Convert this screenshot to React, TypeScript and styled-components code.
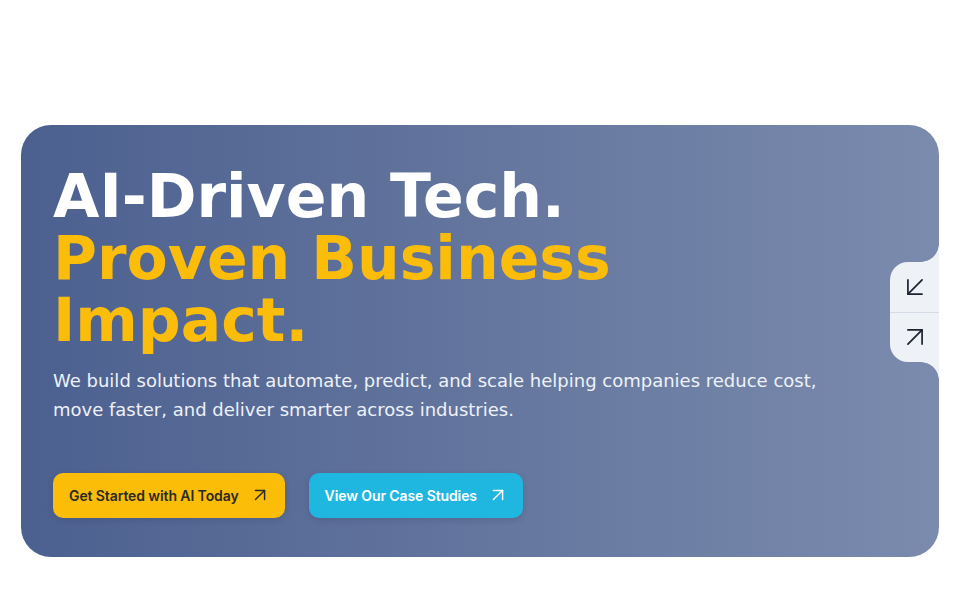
import React from "react";
import styled, { createGlobalStyle } from "styled-components";
import { ArrowDownLeft, ArrowUpRight } from "lucide-react";

const GlobalStyle = createGlobalStyle`
  html, body {
    margin: 0;
    padding: 0;
    background: #ffffff;
  }

  * {
    box-sizing: border-box;
  }
`;

const Page = styled.div`
  width: 960px;
  height: 600px;
  padding: 125px 21px 0;
  overflow: hidden;
`;

const Hero = styled.section`
  position: relative;
  height: 432px;
  padding: 40px 32px;
  border-radius: 30px;
  background: linear-gradient(90deg, #4c6090 0%, #66789f 55%, #7b8bae 100%);
  color: #ffffff;
  font-family: "DejaVu Sans", sans-serif;
`;

const Title = styled.h1`
  margin: 0;
  max-width: 640px;
  font-size: 60px;
  font-weight: 700;
  line-height: 62px;
  color: #ffffff;

  .accent {
    display: block;
    color: #fbbd0a;
  }
`;

const Lead = styled.p`
  margin: 16px 0 0;
  max-width: 800px;
  font-size: 18px;
  line-height: 28.8px;
  color: #eef1f8;
`;

const Actions = styled.div`
  display: flex;
  gap: 24px;
  margin-top: 48px;
`;

const CtaButton = styled.button<{ $variant: "primary" | "secondary" }>`
  display: inline-flex;
  align-items: center;
  gap: 10px;
  height: 45px;
  padding: 0 14px 0 16px;
  border: none;
  border-radius: 10px;
  font-family: Inter, "Noto Sans", sans-serif;
  font-size: 14px;
  font-weight: 600;
  letter-spacing: -0.1px;
  cursor: pointer;
  background: ${(p) => (p.$variant === "primary" ? "#fbbd08" : "#1fb7df")};
  color: ${(p) => (p.$variant === "primary" ? "#2b2a26" : "#ffffff")};
  box-shadow: 0 2px 6px rgba(20, 30, 60, 0.15);
`;

const SideTab = styled.div`
  position: absolute;
  right: 0;
  top: 137px;
  width: 49px;
  height: 100px;
  display: flex;
  flex-direction: column;
  background: #eef2f7;
  border-radius: 18px 0 0 18px;

  &::before,
  &::after {
    content: "";
    position: absolute;
    right: 0;
    width: 18px;
    height: 18px;
  }

  &::before {
    top: -18px;
    background: radial-gradient(circle at 0 0, transparent 17.5px, #eef2f7 18px);
  }

  &::after {
    bottom: -18px;
    background: radial-gradient(circle at 0 100%, transparent 17.5px, #eef2f7 18px);
  }
`;

const TabButton = styled.button`
  flex: 1;
  display: flex;
  align-items: center;
  justify-content: center;
  padding: 0;
  border: none;
  background: transparent;
  color: #1c2230;
  cursor: pointer;

  & + & {
    border-top: 1px solid #d6dce6;
  }
`;

export default function App() {
  return (
    <>
      <GlobalStyle />
      <Page>
        <Hero>
          <Title>
            AI-Driven Tech.
            <span className="accent">Proven Business Impact.</span>
          </Title>
          <Lead>
            We build solutions that automate, predict, and scale helping companies reduce cost,
            move faster, and deliver smarter across industries.
          </Lead>
          <Actions>
            <CtaButton $variant="primary">
              Get Started with AI Today
              <ArrowUpRight size={22} strokeWidth={1.6} />
            </CtaButton>
            <CtaButton $variant="secondary">
              View Our Case Studies
              <ArrowUpRight size={22} strokeWidth={1.6} />
            </CtaButton>
          </Actions>
          <SideTab>
            <TabButton aria-label="Previous">
              <ArrowDownLeft size={34} strokeWidth={1.2} />
            </TabButton>
            <TabButton aria-label="Next">
              <ArrowUpRight size={34} strokeWidth={1.2} />
            </TabButton>
          </SideTab>
        </Hero>
      </Page>
    </>
  );
}
